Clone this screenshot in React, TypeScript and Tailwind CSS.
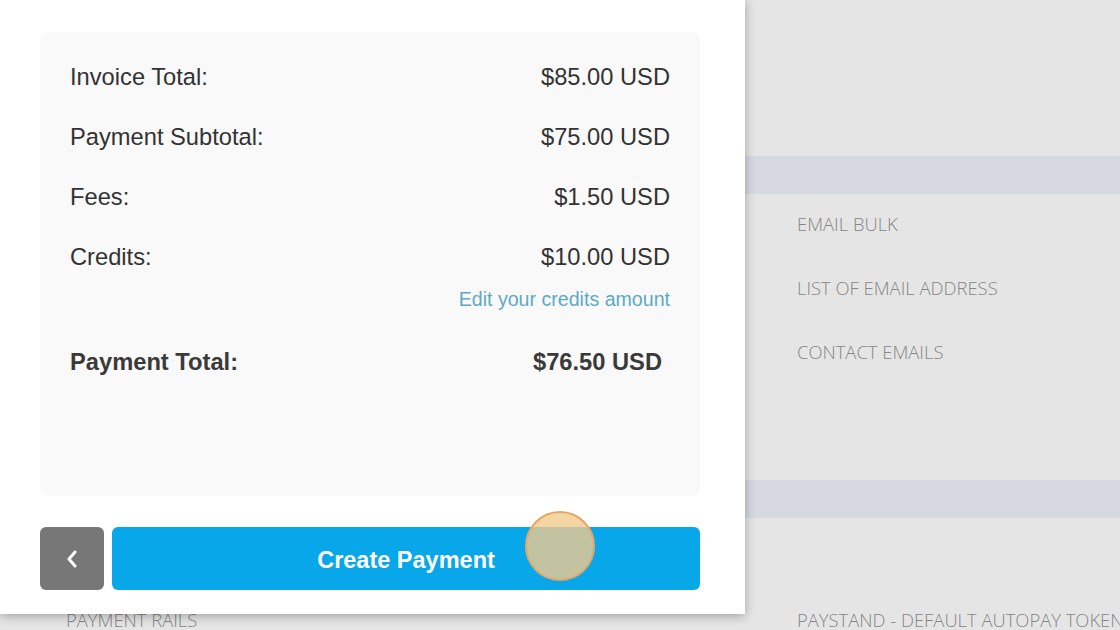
export default function App() {
  const rows = [
    { label: 'Invoice Total:', value: '$85.00 USD' },
    { label: 'Payment Subtotal:', value: '$75.00 USD' },
    { label: 'Fees:', value: '$1.50 USD' },
    { label: 'Credits:', value: '$10.00 USD' },
  ]

  return (
    <div className="relative w-[1120px] h-[630px] overflow-hidden bg-[#e5e5e5]">
      {/* Page behind the modal */}
      <div className="flex flex-col font-['Open_Sans',sans-serif] font-light text-[18.4px] leading-[22px] text-[#858585] uppercase">
        <div className="h-[156px]"></div>
        <div className="h-[38px] bg-[#d6d9e0]"></div>
        <div className="grid grid-cols-[797px_1fr] h-[286px]">
          <div></div>
          <div className="flex flex-col gap-[42px] pt-[19px]">
            <p>Email Bulk</p>
            <p>List of Email Address</p>
            <p>Contact Emails</p>
          </div>
        </div>
        <div className="h-[38px] bg-[#d6d9e0]"></div>
        <div className="grid grid-cols-[797px_1fr] pt-[91px]">
          <p className="pl-[66px]">Payment Rails</p>
          <p className="whitespace-nowrap">Paystand - Default Autopay Token</p>
        </div>
      </div>

      {/* Modal */}
      <div className="absolute top-0 left-0 w-[745px] h-[614px] bg-white shadow-[0_2px_10px_rgba(0,0,0,0.3)] pl-[40px] pr-[45px] pt-[32px] font-['Liberation_Sans',Arial,sans-serif] text-[#333]">
        <div className="h-[464px] rounded-lg bg-[#f9f9f9] px-[30px] pt-[31px]">
          <div className="flex flex-col gap-[32px]">
            {rows.map((r) => (
              <div key={r.label} className="flex justify-between text-[23.7px] leading-[28px]">
                <span>{r.label}</span>
                <span>{r.value}</span>
              </div>
            ))}
          </div>
          <div className="mt-[17px] text-right text-[19.6px] leading-[22px] text-[#5fa9c6]">
            Edit your credits amount
          </div>
          <div className="mt-[38px] flex justify-between pr-[8px] text-[23.7px] leading-[28px] font-bold text-[#3a3a3a]">
            <span>Payment Total:</span>
            <span>$76.50 USD</span>
          </div>
        </div>

        <div className="mt-[31px] flex gap-[8px] h-[63px]">
          <button className="w-[64px] rounded-md bg-[#777] flex items-center justify-center">
            <svg width="14" height="18" viewBox="0 0 14 18" fill="none">
              <polyline points="10,2 4,9 10,16" stroke="white" strokeWidth="3" strokeLinecap="round" strokeLinejoin="round" />
            </svg>
          </button>
          <button className="relative flex-1 rounded-md bg-[#08a7e9] text-white text-[23.5px] font-bold flex items-center justify-center pt-[4px]">
            Create Payment
            <span className="absolute left-[413px] top-[-16px] w-[70px] h-[70px] rounded-full bg-[rgba(244,202,142,0.8)] border-2 border-[#e3a867]"></span>
          </button>
        </div>
      </div>
    </div>
  )
}
